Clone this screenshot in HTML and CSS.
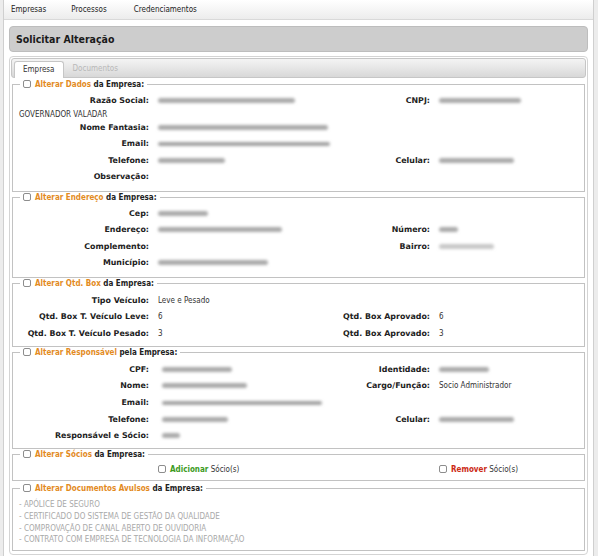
FILE: index.html
```html
<!DOCTYPE html>
<html lang="pt-BR">
<head>
<meta charset="UTF-8" />
<title>Solicitar Alteração</title>
<link rel="stylesheet" href="styles.css">
</head>
<body>
  <div class="page">
    <!-- MENU -->
    <nav class="topnav">
      <a href="#">Empresas</a>
      <a href="#">Processos</a>
      <a href="#">Credenciamentos</a>
    </nav>

    <div class="title">Solicitar Alteração</div>

    <div class="tabs">
      <ul class="tabbar">
        <li class="tab active">Empresa</li>
        <li class="tab">Documentos</li>
      </ul>

      <div class="panel">
        <!-- DADOS -->
        <fieldset>
          <legend><span class="check"></span><em>Alterar Dados</em> da Empresa:</legend>
          <div class="rows">
            <label class="l1">Razão Social:</label>
            <span class="val"><span class="blur" style="width:137px"></span></span>
            <label class="l2">CNPJ:</label>
            <span class="val"><span class="blur" style="width:82px"></span></span>
            <span class="cont">GOVERNADOR VALADAR</span>
            <label class="l1">Nome Fantasia:</label>
            <span class="val wide"><span class="blur" style="width:170px"></span></span>
            <label class="l1">Email:</label>
            <span class="val wide"><span class="blur thin" style="width:172px"></span></span>
            <label class="l1">Telefone:</label>
            <span class="val"><span class="blur" style="width:67px"></span></span>
            <label class="l2">Celular:</label>
            <span class="val"><span class="blur" style="width:75px"></span></span>
            <label class="l1">Observação:</label>
            <span class="val"></span>
          </div>
        </fieldset>

        <!-- ENDERECO -->
        <fieldset>
          <legend><span class="check"></span><em>Alterar Endereço</em> da Empresa:</legend>
          <div class="rows">
            <label class="l1">Cep:</label>
            <span class="val"><span class="blur" style="width:50px"></span></span>
            <label class="l1">Endereço:</label>
            <span class="val"><span class="blur" style="width:124px"></span></span>
            <label class="l2">Número:</label>
            <span class="val"><span class="blur" style="width:19px"></span></span>
            <label class="l1">Complemento:</label>
            <span class="val"></span>
            <label class="l2">Bairro:</label>
            <span class="val"><span class="blur light" style="width:55px"></span></span>
            <label class="l1">Município:</label>
            <span class="val"><span class="blur" style="width:110px"></span></span>
          </div>
        </fieldset>

        <!-- BOX -->
        <fieldset class="tight">
          <legend><span class="check"></span><em>Alterar Qtd. Box</em> da Empresa:</legend>
          <div class="rows">
            <label class="l1">Tipo Veículo:</label>
            <span class="val">Leve e Pesado</span>
            <label class="l1">Qtd. Box T. Veículo Leve:</label>
            <span class="val">6</span>
            <label class="l2">Qtd. Box Aprovado:</label>
            <span class="val">6</span>
            <label class="l1">Qtd. Box T. Veículo Pesado:</label>
            <span class="val">3</span>
            <label class="l2">Qtd. Box Aprovado:</label>
            <span class="val">3</span>
          </div>
        </fieldset>

        <!-- RESPONSAVEL -->
        <fieldset class="tight">
          <legend><span class="check"></span><em>Alterar Responsável</em> pela Empresa:</legend>
          <div class="rows shift">
            <label class="l1">CPF:</label>
            <span class="val"><span class="blur" style="width:70px"></span></span>
            <label class="l2">Identidade:</label>
            <span class="val"><span class="blur" style="width:50px"></span></span>
            <label class="l1">Nome:</label>
            <span class="val"><span class="blur" style="width:85px"></span></span>
            <label class="l2">Cargo/Função:</label>
            <span class="val">Socio Administrador</span>
            <label class="l1">Email:</label>
            <span class="val wide"><span class="blur thin" style="width:160px"></span></span>
            <label class="l1">Telefone:</label>
            <span class="val"><span class="blur" style="width:66px"></span></span>
            <label class="l2">Celular:</label>
            <span class="val"><span class="blur" style="width:75px"></span></span>
            <label class="l1">Responsável e Sócio:</label>
            <span class="val"><span class="blur" style="width:18px"></span></span>
          </div>
        </fieldset>

        <!-- SOCIOS -->
        <fieldset class="socios">
          <legend><span class="check"></span><em>Alterar Sócios</em> da Empresa:</legend>
          <div class="rows">
            <span class="val c2"><span class="check"></span><b class="add">Adicionar</b> Sócio(s)</span>
            <span class="val c4"><span class="check"></span><b class="remove">Remover</b> Sócio(s)</span>
          </div>
        </fieldset>

        <!-- DOCUMENTOS -->
        <fieldset class="docs">
          <legend><span class="check"></span><em>Alterar Documentos Avulsos</em> da Empresa:</legend>
          <ul>
            <li>- APÓLICE DE SEGURO</li>
            <li>- CERTIFICADO DO SISTEMA DE GESTÃO DA QUALIDADE</li>
            <li>- COMPROVAÇÃO DE CANAL ABERTO DE OUVIDORIA</li>
            <li>- CONTRATO COM EMPRESA DE TECNOLOGIA DA INFORMAÇÃO</li>
          </ul>
        </fieldset>
      </div>
    </div>
  </div>
</body>
</html>
```

FILE: styles.css
```css
:root {
  --orange: #e38b1e;
  --line: #c2c2c2;
  --text: #222;
  --cond: 'DejaVu Sans Condensed', 'DejaVu Sans', sans-serif;
}

* {
  box-sizing: border-box;
}

html,
body {
  margin: 0;
  padding: 0;
  background: #ececec;
  color: var(--text);
  font-family: 'DejaVu Sans', sans-serif;
}

.page {
  margin: 0 4px 0 3px;
  min-height: 556px;
  background: #fff;
  border-left: 1px solid #cfcfcf;
  border-right: 1px solid #cfcfcf;
}

/* ------------ MENU ------------- */
.topnav {
  height: 20px;
  display: flex;
  align-items: center;
  gap: 25px;
  padding-left: 7px;
  background: linear-gradient(#ffffff, #ececec);
  border-bottom: 1px solid #d9d9d9;
}
.topnav a {
  font: 8px var(--cond);
  color: #222;
  text-decoration: none;
}
.topnav a:last-child { margin-left: 2px; }

.title {
  margin: 6px 5px 0;
  height: 26px;
  display: flex;
  align-items: center;
  padding-left: 6px;
  background: #cdcdcd;
  border: 1px solid #bdbdbd;
  border-radius: 4px;
  font: bold 10.5px var(--cond);
  color: #1a1a1a;
}

/* ------------ TABS ------------- */
.tabs {
  margin: 4px 5px 0;
  padding: 1px;
  border: 1px solid #d4d4d4;
  border-radius: 4px;
}
.tabbar {
  margin: 0;
  padding: 0 2px;
  height: 20px;
  list-style: none;
  display: flex;
  align-items: flex-end;
  background: linear-gradient(#f4f4f4, #d8d8d8);
  border: 1px solid #c6c6c6;
  border-radius: 3px;
}
.tab {
  height: 17px;
  padding: 0 8px;
  margin-right: 1px;
  margin-bottom: -1px;
  font: 8px/16px var(--cond);
  color: #b8b8b8;
}
.tab.active {
  background: #fff;
  color: #333;
  border: 1px solid #c6c6c6;
  border-bottom: none;
  border-radius: 3px 3px 0 0;
}

.panel {
  padding: 1px 1px 2px;
}

/* ------------ FIELDSETS ------------- */
fieldset {
  margin: 0;
  padding: 3px 0 5px;
  min-width: 0;
  border: 1px solid var(--line);
}
legend {
  margin-left: 7px;
  padding: 0 3px;
  font: bold 8px/11px var(--cond);
  color: var(--text);
}
legend em {
  font-style: normal;
  color: var(--orange);
}

.check {
  display: inline-block;
  width: 8px;
  height: 8px;
  margin-right: 4px;
  vertical-align: -1px;
  border: 1px solid #8d8d8d;
  border-radius: 2px;
  background: #fff;
}

.rows {
  display: grid;
  grid-template-columns: 136px 143px 120px 1fr;
  column-gap: 9px;
}
.rows label,
.rows .val {
  line-height: 16.5px;
  white-space: nowrap;
}
.rows label {
  text-align: right;
  font-weight: bold;
  font-size: 7.9px;
  color: var(--text);
}
.l1 { grid-column: 1; }
.l2 { grid-column: 3; }
.c2 { grid-column: 2; }
.c4 { grid-column: 4; }
.val {
  font: 8px/16.5px var(--cond);
  color: #333;
}
.val.wide { grid-column: 2 / -1; }
.shift .l1 + .val { padding-left: 4px; }
.cont {
  grid-column: 1 / -1;
  padding-left: 6px;
  font: 8px/10px var(--cond);
  color: #333;
}

.blur {
  display: inline-block;
  height: 5px;
  vertical-align: middle;
  background: #aaa;
  border-radius: 3px;
  filter: blur(1.4px);
}
.blur.thin { height: 4px; background: #a2a2a2; }
.blur.light { background: #c8c8c8; }

.tight { padding: 4px 0 3px; }
.tight .rows label,
.tight .rows .val { line-height: 16.7px; }

.socios { padding: 3px 0 4px; }
.socios .rows .val { line-height: 13px; }
.add { color: #3c9a1c; }
.remove { color: #cc2a15; }

.docs { margin-top: 2px; padding: 5px 0 4px; }
.docs ul {
  margin: 0;
  padding: 0 0 0 6px;
  list-style: none;
}
.docs li {
  font: 8px/11.7px var(--cond);
  color: #a9a9a9;
}
```
